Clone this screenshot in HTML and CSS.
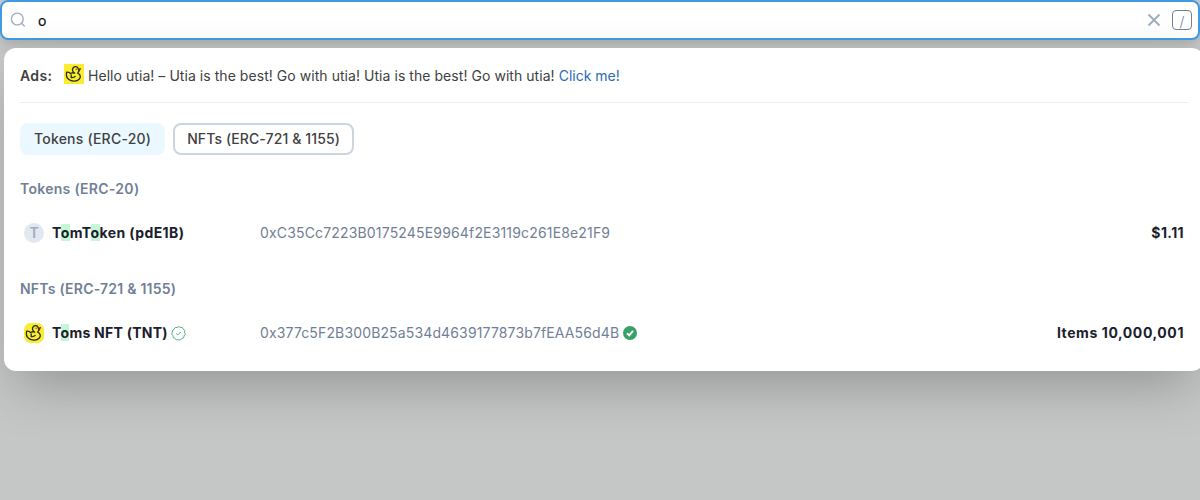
FILE: index.html
```html
<!DOCTYPE html>
<html lang="en">
<head>
<meta charset="utf-8">
<title>Search</title>
<link rel="stylesheet" href="styles.css">
</head>
<body>
<svg class="defs" aria-hidden="true">
  <symbol id="duck" viewBox="0 0 20 20">
    <rect width="20" height="20" fill="#f9ec31"/>
    <g fill="none" stroke="#292b16" stroke-width="1.3" stroke-linecap="round" stroke-linejoin="round">
      <path d="M14.6 7.4C14.3 8.4 14 8.8 13.7 9.2C16.8 10.7 17 13.3 15.1 15.2C13 17.5 7.6 17.7 4.9 15.6C2.5 13.7 1.9 10.8 2.7 8.1C4.3 7.9 5.6 8.3 6.3 9.5C7.8 8.5 9.3 8.9 10.7 9.2C8.4 8.2 7.9 5.3 9.2 3.8C10.8 1.9 13.7 2.4 14.3 4.8"/>
      <path d="M7.2 10.8V13.6C9 13.8 10.3 13.5 11.2 12.4"/>
    </g>
    <path d="M13.8 4.7L17.2 4.1L15.6 7.8L14.1 7Z" fill="#57311c"/><circle cx="12.2" cy="5.2" r=".6" fill="#292b16"/>
  </symbol>
</svg>
<header class="search">
  <svg class="search-icon" viewBox="0 0 16 16"><circle cx="7.3" cy="7" r="5.9"/><path d="M11.8 11.5L14.3 14"/></svg>
  <span class="query">o</span>
  <svg class="clear" viewBox="0 0 14 14"><path d="M1.5 1.5L12.5 12.5M12.5 1.5L1.5 12.5"/></svg>
  <span class="key">/</span>
</header>
<main class="panel">
  <div class="ad"><b>Ads:</b><svg class="ad-image"><use href="#duck"/></svg><span>Hello utia! – Utia is the best! Go with utia! Utia is the best! Go with utia! <a>Click me!</a></span></div>
  <nav class="tabs"><span class="tab active">Tokens (ERC-20)</span><span class="tab">NFTs (ERC-721 &amp; 1155)</span></nav>
  <section class="group tokens">
    <h2>Tokens (ERC-20)</h2>
    <div class="row">
      <span class="avatar">T</span>
      <span class="name"><span>T<mark>o</mark>mT<mark>o</mark>ken (pdE1B)</span></span>
      <span class="hash">0xC35Cc7223B0175245E9964f2E3119c261E8e21F9</span>
      <span class="value">$1.11</span>
    </div>
  </section>
  <section class="group nfts">
    <h2>NFTs (ERC-721 &amp; 1155)</h2>
    <div class="row">
      <svg class="avatar"><use href="#duck"/></svg>
      <span class="name"><span>T<mark>o</mark>ms NFT (TNT)</span><svg class="seal" viewBox="0 0 14 14"><path d="M7 .6L8.7 1.3L10.6 1.4L11.4 3L12.9 4.2L12.7 6.1L13.4 7.8L12.2 9.2L11.8 11L10 11.7L8.7 13.1L7 12.7L5.1 13.1L3.9 11.6L2.1 10.9L1.8 9L.6 7.6L1.3 5.9L1.3 4L2.9 3L4 1.4L5.8 1.4Z"/><path d="M4.8 7L6.3 8.4L9.1 5.6"/></svg></span>
      <span class="hash">0x377c5F2B300B25a534d4639177873b7fEAA56d4B<svg class="check" viewBox="0 0 14 14"><circle cx="7" cy="7" r="7"/><path d="M4 7.3L6.2 9.4L10 4.9"/></svg></span>
      <span class="value">Items 10,000,001</span>
    </div>
  </section>
</main>
</body>
</html>
```
FILE: styles.css
```css
* { box-sizing: border-box; }
body { margin: 0; height: 500px; overflow: hidden; background: #c5c7c6; font: 14px/20px Inter, sans-serif; color: #404141; }
.defs { display: none; }
.search { height: 40px; display: flex; align-items: center; padding: 0 6px 0 8px; border: 2px solid #4299e1; border-radius: 8px; background: linear-gradient(#fff 45%, #fcfcfc); box-shadow: 0 10px 15px -3px rgba(0,0,0,.1), 0 4px 6px -2px rgba(0,0,0,.05); }
.search-icon { width: 16px; height: 16px; fill: none; stroke: #a0aec0; stroke-width: 1.4; stroke-linecap: round; }
.query { flex: 1; padding: 2px 0 0 12px; color: #101112; -webkit-text-stroke: .2px #101112; }
.clear { width: 14px; height: 14px; margin-right: 11px; stroke: #a0aec0; stroke-width: 2; }
.key { width: 20px; height: 20px; border: 1px solid #718096; border-radius: 4px; color: #718096; text-align: center; line-height: 21px; font-weight: 300; }
.panel { width: 1200px; height: 323px; margin: 8px 0 0 4px; padding: 16px; border-radius: 12px; background: #fff; box-shadow: 0 25px 50px -12px rgba(0,0,0,.25); }
.ad { height: 39px; display: flex; align-items: flex-start; padding-top: 2px; border-bottom: 1px solid #edeeee; letter-spacing: .05px; }
.ad b { font-weight: 600; width: 44px; letter-spacing: .35px; }
.ad-image { width: 20px; height: 20px; margin: -2px 4px 0 0; }
.ad a { color: #2b6cb0; letter-spacing: 0; }
.tabs { display: flex; gap: 8px; margin-top: 20px; }
.tab { height: 32px; padding: 0 12px; border: 2px solid #cbd5e0; border-radius: 8px; font-weight: 500; line-height: 28px; letter-spacing: .11px; }
.tab.active { border-color: #ebf8ff; background: #ebf8ff; letter-spacing: .22px; }
.group { margin-top: 24px; }
.nfts { margin-top: 36px; }
h2 { margin: 0; font-size: 14px; line-height: 20px; font-weight: 600; color: #718096; letter-spacing: .29px; }
.nfts h2 { letter-spacing: .23px; }
.row { display: flex; align-items: center; height: 20px; margin-top: 24px; padding: 0 4px; }
.avatar { width: 20px; height: 20px; margin-right: 8px; border-radius: 10px; background: #e2e8f0; color: #a0aec0; text-align: center; font-weight: 600; }
svg.avatar { border-radius: 7px; }
.name { width: 208px; display: flex; align-items: center; color: #1a202c; font-weight: 700; letter-spacing: .4px; }
.nfts .name { letter-spacing: .26px; }
mark { color: inherit; background: #c6f6d5; }
.hash { display: flex; align-items: center; color: #718096; letter-spacing: .165px; }
.nfts .hash { letter-spacing: .14px; }
.value { margin-left: auto; color: #1a202c; font-weight: 700; letter-spacing: .4px; }
.nfts .value { letter-spacing: .58px; }
.seal { width: 15px; height: 15px; margin-left: 3.5px; fill: none; stroke: #38a169; stroke-width: .8; }
.check { width: 14px; height: 14px; margin-left: 4px; fill: #38a169; }
.check path { fill: none; stroke: #fff; stroke-width: 2; }
```
